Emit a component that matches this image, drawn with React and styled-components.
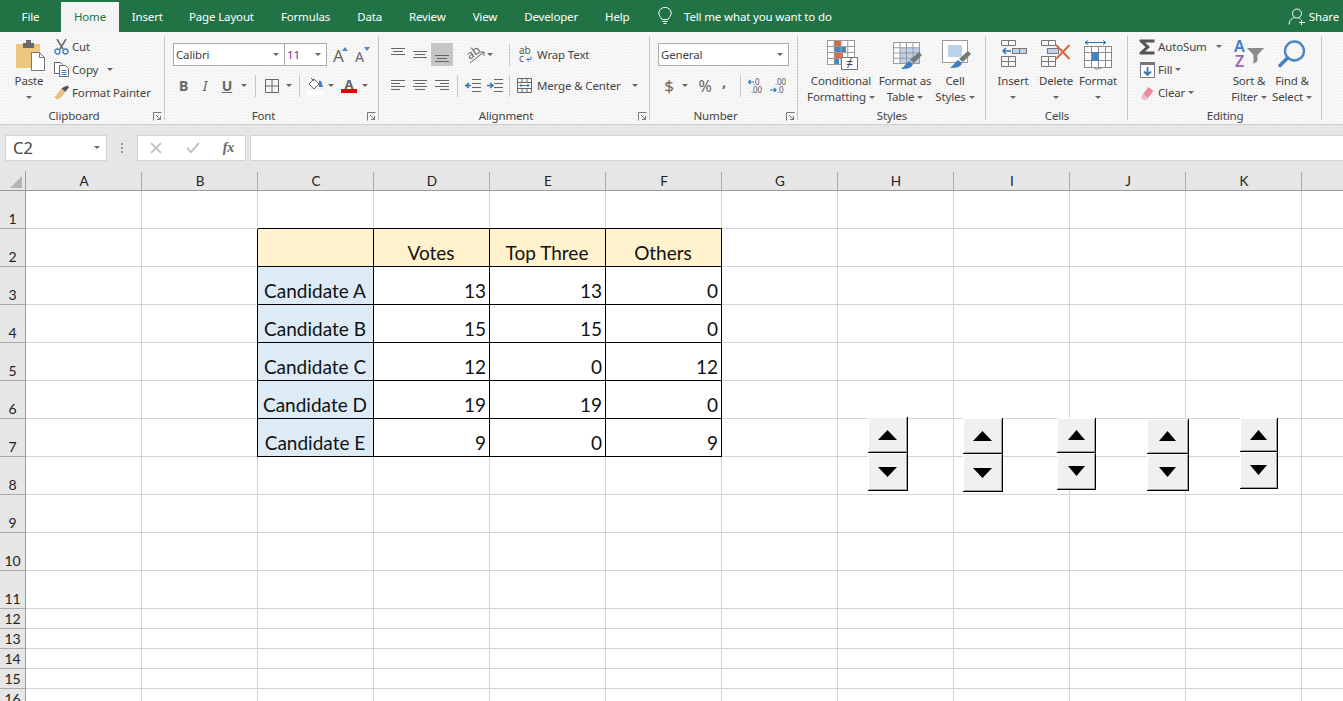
import React from 'react';
import styled, { createGlobalStyle } from 'styled-components';

const uiFont = '"Noto Sans", "Open Sans", sans-serif';
const cellFont = 'Lato, "Liberation Sans", sans-serif';

const Global = createGlobalStyle`
  html, body { margin: 0; padding: 0; height: 100%; overflow: hidden; background: #fff; }
  body { font-family: ${uiFont}; }
`;

const Page = styled.div`
  width: 1343px;
  height: 701px;
  overflow: hidden;
  display: flex;
  flex-direction: column;
`;

/* title / tab bar */
const TabBar = styled.div`
  height: 32px;
  flex: none;
  background: #217346;
  display: flex;
  align-items: flex-end;
  color: #fff;
  font-size: 11.5px;
  letter-spacing: -0.15px;
`;

const Tab = styled.div`
  height: ${p => (p.$active ? 30 : 32)}px;
  width: ${p => (p.$w ? `${p.$w}px` : 'auto')};
  padding: ${p => (p.$active ? '0 0 2px' : `0 ${p.$w ? 0 : 13.5}px`)};
  display: flex;
  align-items: center;
  justify-content: center;
  box-sizing: border-box;
  background: ${p => (p.$active ? '#f3f3f3' : 'transparent')};
  color: ${p => (p.$active ? '#217346' : '#fff')};
`;

const TellMe = styled.div`
  height: 32px;
  display: flex;
  align-items: center;
  gap: 12px;
  margin-left: 15px;
`;

const Share = styled.div`
  height: 32px;
  margin-left: auto;
  padding-right: 4px;
  display: flex;
  align-items: center;
  gap: 3px;
`;

/* ribbon */
const Ribbon = styled.div`
  height: 93px;
  flex: none;
  box-sizing: border-box;
  padding-top: 3px;
  display: flex;
  background-color: #f3f3f3;
  background-image: radial-gradient(circle at 1px 1px, #fafafa 0.7px, transparent 0.8px);
  background-size: 3px 3px;
  color: #444;
  font-size: 11.5px;
  letter-spacing: -0.15px;
  border-bottom: 1px solid #cfcfcf;
`;

const Group = styled.section`
  position: relative;
  width: ${p => p.$w}px;
  flex: none;
  display: flex;
  flex-direction: column;
  &::after {
    content: '';
    position: absolute;
    right: 0;
    top: 1px;
    height: 84px;
    width: 1px;
    background: #c6c6c6;
  }
`;

const GroupBody = styled.div`
  height: 70px;
  flex: none;
  display: flex;
  box-sizing: border-box;
  padding-left: ${p => p.$pad || 0}px;
`;

const GroupFooter = styled.div`
  height: 16px;
  margin-top: 3px;
  display: flex;
  align-items: center;
  line-height: 16px;
`;

const GroupLabel = styled.div`
  flex: 1;
  text-align: center;
`;

const Launcher = styled.div`
  width: 17px;
  flex: none;
  box-sizing: border-box;
  padding-left: 5px;
  display: flex;
`;

const BigButton = styled.div`
  width: ${p => p.$w}px;
  flex: none;
  display: flex;
  flex-direction: column;
  align-items: center;
`;

const BigIcon = styled.div`
  height: 38px;
  display: flex;
  align-items: flex-start;
  padding-top: 5px;
  margin-left: ${p => p.$ml || 0}px;
  box-sizing: border-box;
`;

const BigLabel = styled.div`
  text-align: center;
  line-height: 16px;
  white-space: nowrap;
`;

const Stack = styled.div`
  width: ${p => (p.$w ? `${p.$w}px` : 'auto')};
  flex: none;
  display: flex;
  flex-direction: column;
`;

const SmallRow = styled.div`
  height: 23px;
  display: flex;
  align-items: center;
  white-space: nowrap;
`;

const ControlStack = styled.div`
  flex: none;
  display: flex;
  flex-direction: column;
  gap: 8px;
  padding-top: 8px;
`;

const Slot = styled.div`
  width: ${p => p.$w}px;
  height: ${p => (p.$on ? '23px' : 'auto')};
  flex: none;
  display: flex;
  align-items: center;
  justify-content: center;
  background: ${p => (p.$on ? '#c6c6c6' : 'transparent')};
`;

const Gap = styled.div`
  width: ${p => p.$w}px;
  flex: none;
`;

const VRule = styled.div`
  width: 1px;
  height: 22px;
  flex: none;
  background: #c6c6c6;
`;

const Caret = styled.span`
  display: inline-block;
  width: 0;
  height: 0;
  border-left: 3.5px solid transparent;
  border-right: 3.5px solid transparent;
  border-top: 3.5px solid #666;
  vertical-align: middle;
  margin-left: ${p => p.$ml || 0}px;
`;

const Select = styled.div`
  width: ${p => p.$w}px;
  height: 23px;
  flex: none;
  box-sizing: border-box;
  margin-right: ${p => p.$mr || 0}px;
  padding: 0 5px 0 2px;
  display: flex;
  align-items: center;
  justify-content: space-between;
  background: #fff;
  border: 1px solid #ababab;
  color: #444;
`;

const SizeValue = styled.span`
  color: #7030a0;
`;

const Glyph = styled.span`
  font-family: ${p => (p.$serif ? '"Liberation Serif", serif' : uiFont)};
  font-size: ${p => p.$size || 12}px;
  font-weight: ${p => (p.$bold ? 700 : 400)};
  font-style: ${p => (p.$italic ? 'italic' : 'normal')};
  text-decoration: ${p => (p.$under ? 'underline' : 'none')};
  margin-bottom: ${p => p.$mb || 0}px;
  color: #666;
  line-height: 1;
`;

/* formula bar */
const FormulaBar = styled.div`
  height: 46px;
  flex: none;
  box-sizing: border-box;
  padding: 10px 0 10px 5px;
  background: #e6e6e6;
  display: flex;
  align-items: stretch;
`;

const NameBox = styled.div`
  width: 102px;
  flex: none;
  box-sizing: border-box;
  padding: 0 6px 2px 7px;
  display: flex;
  align-items: center;
  justify-content: space-between;
  background: #fff;
  border: 1px solid #d4d4d4;
  font-size: 16.5px;
  color: #444;
`;

const GripDots = styled.div`
  width: 30px;
  flex: none;
  display: flex;
  align-items: center;
  justify-content: center;
`;

const FxBox = styled.div`
  width: 109px;
  flex: none;
  box-sizing: border-box;
  display: flex;
  align-items: center;
  background: #fff;
  border: 1px solid #d4d4d4;
`;

const FormulaInput = styled.div`
  flex: 1;
  margin-left: 4px;
  background: #fff;
  border: 1px solid #d4d4d4;
  border-right: 0;
`;

/* sheet */
const Sheet = styled.div`
  position: relative;
  flex: 1;
  min-height: 0;
  overflow: hidden;
  background: #fff;
`;

const SheetGrid = styled.div`
  display: grid;
  grid-template-columns: 26px repeat(12, 116px);
  grid-template-rows: 20px repeat(11, 38px) repeat(5, 20px);
  width: 1418px;
`;

const Corner = styled.div`
  background: #e6e6e6;
  border-right: 1px solid #9b9b9b;
  border-bottom: 1px solid #9b9b9b;
  box-sizing: border-box;
  display: flex;
  align-items: flex-end;
  justify-content: flex-end;
  padding: 0 3px 2px 0;
`;

const ColHead = styled.div`
  background: #e6e6e6;
  box-shadow: 0 -1px 0 #e6e6e6;
  margin-top: 1px;
  padding-left: 1px;
  border-right: 1px solid #ababab;
  border-bottom: 1px solid #9b9b9b;
  box-sizing: border-box;
  display: flex;
  align-items: center;
  justify-content: center;
  font-family: ${cellFont};
  font-size: 13.5px;
  color: #222;
`;

const RowHead = styled.div`
  background: #e6e6e6;
  border-right: 1px solid #9b9b9b;
  border-bottom: 1px solid #ababab;
  box-sizing: border-box;
  display: flex;
  align-items: flex-end;
  justify-content: center;
  font-family: ${cellFont};
  font-size: 14px;
  line-height: 18px;
  color: #222;
`;

const Cell = styled.div`
  box-sizing: border-box;
  border-right: 1px solid ${p => (p.$boxed ? '#000' : '#d4d4d4')};
  border-bottom: 1px solid ${p => (p.$boxed ? '#000' : '#d4d4d4')};
  box-shadow: ${p => (p.$boxed ? '-1px 0 0 #000, 0 -1px 0 #000' : 'none')};
  background: ${p => p.$fill || '#fff'};
  display: flex;
  align-items: flex-end;
  justify-content: ${p => p.$align || 'flex-end'};
  padding: 0 3px 1px 2px;
  font-family: ${cellFont};
  font-size: 19px;
  line-height: 24px;
  color: #111;
  white-space: nowrap;
`;

const Spinner = styled.div`
  position: absolute;
  left: ${p => p.$x}px;
  top: ${p => p.$y - 171}px;
  width: ${p => p.$w}px;
  height: ${p => p.$h}px;
  display: grid;
  grid-template-rows: ${p => p.$split}px 1fr;
`;

const SpinButton = styled.div`
  display: flex;
  align-items: center;
  justify-content: center;
  background: #f0f0f0;
  border-right: 1px solid #000;
  border-bottom: 1px solid #000;
  box-shadow: inset 1px 1px 0 #fff, inset -1px -1px 0 #a0a0a0;
`;

const Arrow = ({ up, w }) => (
  <svg width={w} height={10} viewBox="0 0 19 10" preserveAspectRatio="none">
    <polygon points={up ? '9.5,0 19,10 0,10' : '0,0 19,0 9.5,10'} fill="#000" />
  </svg>
);

/* ribbon icons, drawn at their pixel size */
const Line = ({ x1, y1, x2, y2, c = '#666', w = 1 }) => (
  <line x1={x1} y1={y1} x2={x2} y2={y2} stroke={c} strokeWidth={w} />
);

const LauncherIcon = () => (
  <svg width="9" height="9" viewBox="0 0 9 9" fill="none" stroke="#777">
    <path d="M0.5 8.5V0.5H8.5" />
    <path d="M3 3L7.5 7.5M4 7.5H7.5V4" />
  </svg>
);

const PasteIcon = () => (
  <svg width="29" height="31" viewBox="0 0 29 31">
    <path d="M0 4h24v24H0z" fill="#eec77f" />
    <path d="M7 3h3V0h5v3h3v5H7z" fill="#6a6a6a" />
    <path d="M15.500 12.500h8l5 5v13h-13z" fill="#fff" stroke="#777" />
    <path d="M23.500 12.500v5h5" fill="none" stroke="#777" />
  </svg>
);

const CutIcon = () => (
  <svg width="15" height="16" viewBox="0 0 15 16" fill="none">
    <path d="M3 0l6 10M12 0L6 10" stroke="#666" strokeWidth="1.5" />
    <circle cx="3.500" cy="12.500" r="2.500" stroke="#3f7fbf" strokeWidth="1.300" />
    <circle cx="11.500" cy="12.500" r="2.500" stroke="#3f7fbf" strokeWidth="1.300" />
  </svg>
);

const CopyIcon = () => (
  <svg width="15" height="15" viewBox="0 0 15 15" fill="#fff" stroke="#666">
    <path d="M0.500 0.500h6l2 2v9h-8z" />
    <path d="M5.500 3.500h6l3 3v8h-9z" />
    <path d="M7.500 8.500h5M7.500 10.500h5M7.500 12.500h5" stroke="#3f7fbf" />
  </svg>
);

const PainterIcon = () => (
  <svg width="16" height="15" viewBox="0 0 16 15">
    <path d="M8 3l4 4-5 6-3 2-4-2 3-3z" fill="#e8c17e" />
    <path d="M8 3l4 4 4-5-2-2z" fill="#555" />
  </svg>
);

const GrowIcon = ({ size, up }) => (
  <svg width="16" height="17" viewBox="0 0 16 17">
    <text x="0" y="16" fontFamily={uiFont} fontSize={size} fill="#666">A</text>
    <polygon points={up ? '9,5 15,5 12,1' : '9,1 15,1 12,5'} fill="#4a87c2" />
  </svg>
);

const BordersIcon = () => (
  <svg width="14" height="14" viewBox="0 0 14 14" fill="none" stroke="#666">
    <path d="M0.500 0.500h13v13h-13zM7 0.500v13M0.500 7h13" />
  </svg>
);

const FillIcon = () => (
  <svg width="17" height="18" viewBox="0 0 17 18">
    <path d="M2 7l5-5 5 5-5 5z" fill="#fff" stroke="#666" />
    <path d="M4 1l3 3" stroke="#666" />
    <path d="M12 4c2-1 3 1 3 3l1 3h-4z" fill="#3f7fbf" />
    <rect x="0" y="14" width="16" height="4" fill="#fff" />
  </svg>
);

const FontColorIcon = () => (
  <svg width="16" height="15" viewBox="0 0 16 15">
    <text x="8" y="11" textAnchor="middle" fontFamily={uiFont} fontSize="13" fontWeight="700" fill="#666">A</text>
    <rect x="0" y="11" width="16" height="4" fill="#e60000" />
  </svg>
);

const TextLines = ({ rows, w = 14 }) => (
  <svg width={w} height="21" viewBox={`0 0 ${w} 21`}>
    {rows.map(([x1, x2, y]) => (
      <Line key={`${x1}-${y}`} x1={x1} x2={x2} y1={y + 0.5} y2={y + 0.5} />
    ))}
  </svg>
);

const OrientIcon = () => (
  <svg width="20" height="20" viewBox="0 0 20 20">
    <text x="1" y="12" transform="rotate(-35 7 9)" fontFamily={uiFont} fontSize="12" fill="#666">ab</text>
    <path d="M4 18L18 7M14 7h4v4" fill="none" stroke="#666" />
  </svg>
);

const WrapIcon = () => (
  <svg width="14" height="17" viewBox="0 0 14 17">
    <text x="0" y="8" fontFamily={uiFont} fontSize="10" fill="#555">ab</text>
    <text x="0" y="16" fontFamily={uiFont} fontSize="10" fill="#555">c</text>
    <path d="M8 13.500h4v-3M8 13.500l2-2M8 13.500l2 2" fill="none" stroke="#3f7fbf" />
  </svg>
);

const IndentIcon = ({ right }) => (
  <svg width="16" height="13" viewBox="0 0 16 13" fill="none">
    <path d="M7 0.500h9M7 4.500h9M7 8.500h9M7 12.500h9" stroke="#666" />
    <path
      d={right ? 'M0 6.500h5M3 4l3 2.500L3 9' : 'M6 6.500H1M4 4L1 6.500 4 9'}
      stroke="#2f74b5"
      strokeWidth="1.500"
    />
  </svg>
);

const MergeIcon = () => (
  <svg width="15" height="15" viewBox="0 0 15 15" fill="none" stroke="#666">
    <path d="M0.500 0.500h14v14h-14zM0.500 4.500h14M0.500 10.500h14M5 0.500v4M10 0.500v4M5 10.500v4M10 10.500v4" />
    <path d="M3 7.500h9M4.500 6L3 7.500 4.500 9M10.500 6L12 7.500 10.500 9" stroke="#2f74b5" />
  </svg>
);

const DecimalIcon = ({ more }) => (
  <svg width="16" height="16" viewBox="0 0 16 16">
    <text x="5" y="7" fontFamily={uiFont} fontSize="8" fill="#555">{more ? '.00' : '.0'}</text>
    <text x={more ? 7 : 3} y="15" fontFamily={uiFont} fontSize="8" fill="#555">{more ? '.0' : '.00'}</text>
    <path
      d={more ? 'M0 12h6M4 10l2 2-2 2' : 'M6 4H0.500M2.500 2L0.500 4l2 2'}
      fill="none"
      stroke="#2f74b5"
      strokeWidth="1.200"
    />
  </svg>
);

const GridLines = ({ x = 0, y = 0, w, h, cols, rows }) => (
  <g stroke="#9a9a9a" fill="none">
    <rect x={x + 0.5} y={y + 0.5} width={w} height={h} />
    {Array.from({ length: cols - 1 }, (_, i) => (
      <line key={`c${i}`} x1={x + 0.5 + (w * (i + 1)) / cols} x2={x + 0.5 + (w * (i + 1)) / cols} y1={y} y2={y + h} />
    ))}
    {Array.from({ length: rows - 1 }, (_, i) => (
      <line key={`r${i}`} y1={y + 0.5 + (h * (i + 1)) / rows} y2={y + 0.5 + (h * (i + 1)) / rows} x1={x} x2={x + w} />
    ))}
  </g>
);

const ConditionalIcon = () => (
  <svg width="31" height="31" viewBox="0 0 31 31">
    <rect width="28" height="25" fill="#fff" />
    <rect x="7" y="1" width="7" height="6" fill="#dd6541" />
    <rect x="7" y="7" width="12" height="6" fill="#4a86c0" />
    <rect x="7" y="13" width="9" height="6" fill="#dd6541" />
    <rect x="7" y="19" width="5" height="6" fill="#4a86c0" />
    <GridLines w={27} h={24} cols={4} rows={4} />
    <rect x="14.500" y="17.500" width="16" height="12" fill="#fff" stroke="#777" />
    <text x="22.500" y="27.500" textAnchor="middle" fontFamily={uiFont} fontSize="12" fill="#444">≠</text>
  </svg>
);

const Brush = ({ x, y }) => (
  <g transform={`translate(${x} ${y})`}>
    <path d="M8 9l4 3c-1 4-5 5-12 5 3-2 5-6 8-8z" fill="#3f7fbf" />
    <path d="M9 8l9-8 3 3-8 8z" fill="#777" />
  </g>
);

const TableIcon = () => (
  <svg width="30" height="30" viewBox="0 -2 30 30">
    <rect x="1" y="1" width="26" height="21" fill="#fff" />
    <rect x="7" y="6" width="20" height="15" fill="#bcd2ea" />
    <GridLines w={26} h={21} cols={4} rows={4} />
    <Brush x={8} y={10} />
  </svg>
);

const CellStylesIcon = () => (
  <svg width="30" height="30" viewBox="0 0 30 30">
    <rect x="0.500" y="0.500" width="25" height="22" fill="#fff" stroke="#9a9a9a" />
    <rect x="6" y="5" width="14" height="12" fill="#bcd2ea" />
    <Brush x={8} y={11} />
  </svg>
);

const InsertIcon = () => (
  <svg width="27" height="28" viewBox="0 0 27 28" fill="none" stroke="#777">
    <path d="M0.500 0.500h14v5h-14zM7.500 0.500v5" />
    <path d="M0.500 16.500h14v10h-14zM0.500 21.500h14M7.500 16.500v10" />
    <rect x="11.500" y="8.500" width="14" height="5" fill="#bcd2ea" />
    <path d="M18.500 8.500v5" />
    <path d="M10 11H2M5 8l-3 3 3 3" stroke="#2f74b5" strokeWidth="1.500" />
  </svg>
);

const DeleteIcon = () => (
  <svg width="30" height="28" viewBox="0 0 30 28" fill="none" stroke="#777">
    <path d="M0.500 0.500h14v5h-14zM7.500 0.500v5" />
    <path d="M0.500 16.500h14v10h-14zM0.500 21.500h14M7.500 16.500v10" />
    <rect x="6.500" y="8.500" width="11" height="5" fill="#bcd2ea" />
    <path d="M15 5l13.500 14M28.500 5L15 19" stroke="#dd6541" strokeWidth="2" />
  </svg>
);

const FormatIcon = () => (
  <svg width="28" height="31" viewBox="0 0 28 31" fill="none" stroke="#8a8a8a">
    <path d="M1 2.500h21M4 0.500L1 2.500l3 2M19 0.500l3 2-3 2" stroke="#2f74b5" />
    <rect x="0.500" y="6.500" width="27" height="21" fill="#fff" />
    <path d="M7.500 6.500v21M14.500 6.500v21M21.500 6.500v21M0.500 12.500h27M0.500 20.500h27" />
    <rect x="8" y="12" width="7" height="9" fill="#4a82bd" stroke="none" />
    <path d="M10 27.500c0 2 4 2 5 1l4-1" />
  </svg>
);

const SumIcon = () => (
  <svg width="16" height="16" viewBox="0 0 16 16">
    <path d="M0.500 0.500h15v3H6l5 4.500-5 4.500h9.500v3H0.500v-2L6.500 8 0.500 2.500z" fill="#555" />
  </svg>
);

const FillDownIcon = () => (
  <svg width="15" height="16" viewBox="0 0 15 16" fill="none">
    <rect x="0.500" y="0.500" width="14" height="15" fill="#fff" stroke="#777" />
    <rect x="0" y="0" width="15" height="3" fill="#777" />
    <path d="M7.500 5v8M4 9.500l3.500 3.500L11 9.500" stroke="#2f74b5" strokeWidth="1.800" />
  </svg>
);

const EraserIcon = () => (
  <svg width="14" height="14" viewBox="0 0 14 14">
    <path d="M8.500 1L13.500 5 8 12 3 8z" fill="#e88a9b" />
    <path d="M3 8L8 12 6 14H3L1 11z" fill="#f2b8c2" />
  </svg>
);

const SortIcon = () => (
  <svg width="31" height="28" viewBox="0 0 31 28">
    <text x="0" y="12" fontFamily={uiFont} fontSize="16" fontWeight="600" fill="#3f7fbf">A</text>
    <text x="1" y="27" fontFamily={uiFont} fontSize="16" fontWeight="600" fill="#9c62b8">Z</text>
    <path d="M13 8h17l-6.500 7v6l-4 3V15z" fill="#8a8a8a" />
  </svg>
);

const FindIcon = () => (
  <svg width="28" height="28" viewBox="0 0 28 28" fill="none">
    <circle cx="16.500" cy="11" r="9.500" stroke="#4a86c0" strokeWidth="2.400" />
    <path d="M9.500 18L2 25.500" stroke="#3f7fbf" strokeWidth="3.500" strokeLinecap="round" />
  </svg>
);

const BulbIcon = () => (
  <svg width="14" height="18" viewBox="0 0 14 18" fill="none" stroke="#fff">
    <path d="M4 12.500C3 10 0.800 9 0.800 6a6.200 5.600 0 0 1 12.400 0c0 3-2.200 4-3.200 6.500z" />
    <path d="M4.500 14.500h5M5.500 16.500h3" />
  </svg>
);

const PersonIcon = () => (
  <svg width="18" height="17" viewBox="0 0 18 17" fill="none" stroke="#fff">
    <circle cx="9" cy="5.500" r="4.500" />
    <path d="M1 16.500c0-4 3-6.500 5.500-7M11 10l1.500 1" />
    <path d="M13.500 12v5M11 14.500h6" />
  </svg>
);

const ColumnNames = ['A', 'B', 'C', 'D', 'E', 'F', 'G', 'H', 'I', 'J', 'K', 'L'];
const RowNumbers = Array.from({ length: 16 }, (_, i) => i + 1);

const TableData = {
  2: ['', 'Votes', 'Top Three', 'Others'],
  3: ['Candidate A', 13, 13, 0],
  4: ['Candidate B', 15, 15, 0],
  5: ['Candidate C', 12, 0, 12],
  6: ['Candidate D', 19, 19, 0],
  7: ['Candidate E', 9, 0, 9],
};

const Spinners = [
  { x: 868, y: 417, w: 40, h: 74, split: 36, arrow: 19 },
  { x: 963, y: 418, w: 40, h: 74, split: 36, arrow: 19 },
  { x: 1057, y: 418, w: 39, h: 72, split: 35, arrow: 17 },
  { x: 1147, y: 419, w: 42, h: 72, split: 35, arrow: 17 },
  { x: 1240, y: 418, w: 38, h: 71, split: 34, arrow: 17 },
];

const renderCell = (row, colIndex) => {
  const data = TableData[row];
  const offset = colIndex - 2;
  if (!data || offset < 0 || offset > 3) return <Cell key={colIndex} />;
  const value = data[offset];
  if (row === 2) {
    return <Cell key={colIndex} $boxed $fill="#fff2cc" $align="center">{value}</Cell>;
  }
  if (offset === 0) {
    return <Cell key={colIndex} $boxed $fill="#ddebf7" $align="center">{value}</Cell>;
  }
  return <Cell key={colIndex} $boxed>{value}</Cell>;
};

const App = () => (
  <Page>
    <Global />
    <TabBar>
      <Tab $w={61}>File</Tab>
      <Tab $active $w={58}>Home</Tab>
      <Tab $w={56.5}>Insert</Tab>
      <Tab>Page Layout</Tab>
      <Tab>Formulas</Tab>
      <Tab>Data</Tab>
      <Tab>Review</Tab>
      <Tab>View</Tab>
      <Tab>Developer</Tab>
      <Tab>Help</Tab>
      <TellMe>
        <BulbIcon />
        <span>Tell me what you want to do</span>
      </TellMe>
      <Share>
        <PersonIcon />
        <span>Share</span>
      </Share>
    </TabBar>

    <Ribbon>
      <Group $w={165}>
        <GroupBody $pad={4}>
          <BigButton $w={50}>
            <BigIcon $ml={3}><PasteIcon /></BigIcon>
            <BigLabel>Paste<br /><Caret /></BigLabel>
          </BigButton>
          <Stack>
            <SmallRow><Slot $w={15}><CutIcon /></Slot><Gap $w={3} />Cut</SmallRow>
            <SmallRow><Slot $w={15}><CopyIcon /></Slot><Gap $w={3} />Copy<Caret $ml={9} /></SmallRow>
            <SmallRow><Slot $w={15}><PainterIcon /></Slot><Gap $w={3} />Format Painter</SmallRow>
          </Stack>
        </GroupBody>
        <GroupFooter>
          <GroupLabel>Clipboard</GroupLabel>
          <Launcher><LauncherIcon /></Launcher>
        </GroupFooter>
      </Group>

      <Group $w={214}>
        <GroupBody $pad={8}>
          <ControlStack>
            <SmallRow>
              <Select $w={112} $mr={-1}>Calibri<Caret /></Select>
              <Select $w={43}><SizeValue>11</SizeValue><Caret /></Select>
              <Gap $w={6} />
              <GrowIcon size={17} up />
              <Gap $w={6} />
              <GrowIcon size={14} />
            </SmallRow>
            <SmallRow>
              <Slot $w={21}><Glyph $bold $size={14}>B</Glyph></Slot>
              <Slot $w={22}><Glyph $italic $size={14}>I</Glyph></Slot>
              <Slot $w={22}><Glyph $bold $under $size={14}>U</Glyph></Slot>
              <Slot $w={12}><Caret /></Slot>
              <Gap $w={5} />
              <VRule />
              <Gap $w={8} />
              <Slot $w={16}><BordersIcon /></Slot>
              <Gap $w={3} />
              <Slot $w={12}><Caret /></Slot>
              <Gap $w={4} />
              <VRule />
              <Gap $w={7} />
              <Slot $w={17}><FillIcon /></Slot>
              <Gap $w={1} />
              <Slot $w={12}><Caret /></Slot>
              <Gap $w={4} />
              <Slot $w={16}><FontColorIcon /></Slot>
              <Gap $w={2} />
              <Slot $w={12}><Caret /></Slot>
            </SmallRow>
          </ControlStack>
        </GroupBody>
        <GroupFooter>
          <GroupLabel>Font</GroupLabel>
          <Launcher><LauncherIcon /></Launcher>
        </GroupFooter>
      </Group>

      <Group $w={271}>
        <GroupBody $pad={8}>
          <ControlStack>
            <SmallRow>
              <Slot $w={22}><TextLines rows={[[0, 14, 4], [2, 12, 7], [0, 14, 10]]} /></Slot>
              <Slot $w={22}><TextLines rows={[[0, 14, 7], [2, 12, 10], [0, 14, 13]]} /></Slot>
              <Slot $w={22} $on><TextLines rows={[[0, 14, 11], [2, 12, 14], [0, 14, 17]]} /></Slot>
              <Gap $w={13} />
              <Slot $w={20}><OrientIcon /></Slot>
              <Caret $ml={1} />
              <Gap $w={16} />
              <VRule />
              <Gap $w={9} />
              <Slot $w={14}><WrapIcon /></Slot>
              <Gap $w={4} />
              Wrap Text
            </SmallRow>
            <SmallRow>
              <Slot $w={22}><TextLines rows={[[0, 14, 5], [0, 9, 8], [0, 14, 11], [0, 9, 14]]} /></Slot>
              <Slot $w={22}><TextLines rows={[[0, 14, 5], [2, 12, 8], [0, 14, 11], [2, 12, 14]]} /></Slot>
              <Slot $w={22}><TextLines rows={[[0, 14, 5], [5, 14, 8], [0, 14, 11], [5, 14, 14]]} /></Slot>
              <Gap $w={4} />
              <VRule />
              <Gap $w={7} />
              <Slot $w={16}><IndentIcon /></Slot>
              <Gap $w={6} />
              <Slot $w={16}><IndentIcon right /></Slot>
              <Gap $w={6} />
              <VRule />
              <Gap $w={7} />
              <Slot $w={15}><MergeIcon /></Slot>
              <Gap $w={5} />
              Merge &amp; Center
              <Caret $ml={11} />
            </SmallRow>
          </ControlStack>
        </GroupBody>
        <GroupFooter>
          <GroupLabel>Alignment</GroupLabel>
          <Launcher><LauncherIcon /></Launcher>
        </GroupFooter>
      </Group>

      <Group $w={148}>
        <GroupBody $pad={8}>
          <ControlStack>
            <SmallRow>
              <Select $w={131}>General<Caret /></Select>
            </SmallRow>
            <SmallRow>
              <Gap $w={2} />
              <Slot $w={18}><Glyph $size={17}>$</Glyph></Slot>
              <Slot $w={14}><Caret /></Slot>
              <Gap $w={5} />
              <Slot $w={16}><Glyph $size={16}>%</Glyph></Slot>
              <Slot $w={22}><Glyph $bold $size={15} $mb={8}>,</Glyph></Slot>
              <Gap $w={5} />
              <VRule />
              <Gap $w={7} />
              <Slot $w={16}><DecimalIcon /></Slot>
              <Gap $w={6} />
              <Slot $w={16}><DecimalIcon more /></Slot>
            </SmallRow>
          </ControlStack>
        </GroupBody>
        <GroupFooter>
          <GroupLabel>Number</GroupLabel>
          <Launcher><LauncherIcon /></Launcher>
        </GroupFooter>
      </Group>

      <Group $w={188}>
        <GroupBody $pad={8}>
          <BigButton $w={70}>
            <BigIcon $ml={3}><ConditionalIcon /></BigIcon>
            <BigLabel>Conditional<br />Formatting<Caret $ml={3} /></BigLabel>
          </BigButton>
          <BigButton $w={58}>
            <BigIcon $ml={5}><TableIcon /></BigIcon>
            <BigLabel>Format as<br />Table<Caret $ml={3} /></BigLabel>
          </BigButton>
          <BigButton $w={42}>
            <BigIcon $ml={3}><CellStylesIcon /></BigIcon>
            <BigLabel>Cell<br />Styles<Caret $ml={3} /></BigLabel>
          </BigButton>
        </GroupBody>
        <GroupFooter>
          <GroupLabel>Styles</GroupLabel>
        </GroupFooter>
      </Group>

      <Group $w={142}>
        <GroupBody $pad={6}>
          <BigButton $w={42}>
            <BigIcon $ml={3}><InsertIcon /></BigIcon>
            <BigLabel>Insert<br /><Caret /></BigLabel>
          </BigButton>
          <BigButton $w={44}>
            <BigIcon><DeleteIcon /></BigIcon>
            <BigLabel>Delete<br /><Caret /></BigLabel>
          </BigButton>
          <BigButton $w={40}>
            <BigIcon><FormatIcon /></BigIcon>
            <BigLabel>Format<br /><Caret /></BigLabel>
          </BigButton>
        </GroupBody>
        <GroupFooter>
          <GroupLabel>Cells</GroupLabel>
        </GroupFooter>
      </Group>

      <Group $w={194}>
        <GroupBody $pad={11}>
          <Stack $w={87}>
            <SmallRow><Slot $w={16}><SumIcon /></Slot><Gap $w={3} />AutoSum<Caret $ml={9} /></SmallRow>
            <SmallRow><Slot $w={16}><FillDownIcon /></Slot><Gap $w={3} />Fill<Caret $ml={3} /></SmallRow>
            <SmallRow><Slot $w={16}><EraserIcon /></Slot><Gap $w={3} />Clear<Caret $ml={3} /></SmallRow>
          </Stack>
          <BigButton $w={46}>
            <BigIcon><SortIcon /></BigIcon>
            <BigLabel>Sort &amp;<br />Filter<Caret $ml={3} /></BigLabel>
          </BigButton>
          <BigButton $w={40}>
            <BigIcon><FindIcon /></BigIcon>
            <BigLabel>Find &amp;<br />Select<Caret $ml={3} /></BigLabel>
          </BigButton>
        </GroupBody>
        <GroupFooter>
          <GroupLabel>Editing</GroupLabel>
        </GroupFooter>
      </Group>
    </Ribbon>

    <FormulaBar>
      <NameBox>C2<Caret /></NameBox>
      <GripDots>
        <svg width="2" height="11" viewBox="0 0 2 11" fill="#9a9a9a">
          <rect y="0" width="2" height="2" />
          <rect y="4" width="2" height="2" />
          <rect y="8" width="2" height="2" />
        </svg>
      </GripDots>
      <FxBox>
        <Slot $w={36}>
          <svg width="12" height="12" viewBox="0 0 12 12" stroke="#c4c4c4" strokeWidth="1.800"><path d="M1 1l10 10M11 1L1 11" /></svg>
        </Slot>
        <Slot $w={38}>
          <svg width="14" height="12" viewBox="0 0 14 12" fill="none" stroke="#c4c4c4" strokeWidth="2"><path d="M1 6l4 4 8-9" /></svg>
        </Slot>
        <Slot $w={33}><Glyph $serif $italic $bold $size={14}>fx</Glyph></Slot>
      </FxBox>
      <FormulaInput />
    </FormulaBar>

    <Sheet>
      <SheetGrid>
        <Corner>
          <svg width="12" height="12" viewBox="0 0 12 12"><polygon points="12,0 12,12 0,12" fill="#b5b5b5" /></svg>
        </Corner>
        {ColumnNames.map(name => <ColHead key={name}>{name}</ColHead>)}
        {RowNumbers.map(row => (
          <React.Fragment key={row}>
            <RowHead>{row}</RowHead>
            {ColumnNames.map((_, colIndex) => renderCell(row, colIndex))}
          </React.Fragment>
        ))}
      </SheetGrid>
      {Spinners.map(s => (
        <Spinner key={s.x} $x={s.x} $y={s.y} $w={s.w} $h={s.h} $split={s.split}>
          <SpinButton><Arrow up w={s.arrow} /></SpinButton>
          <SpinButton><Arrow w={s.arrow} /></SpinButton>
        </Spinner>
      ))}
    </Sheet>
  </Page>
);

export default App;
